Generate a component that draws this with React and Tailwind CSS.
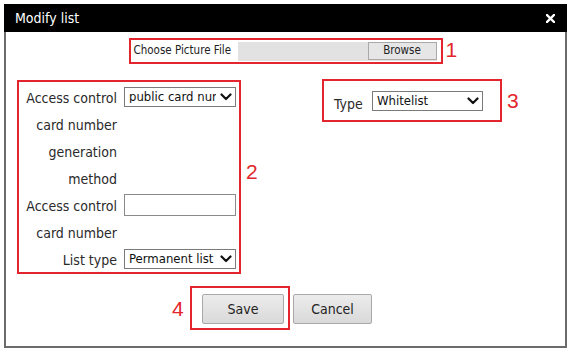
const FONT = "font-['DejaVu_Sans_Condensed','DejaVu_Sans',sans-serif]"

function Chevron() {
  return (
    <svg width="12" height="8" viewBox="0 0 12 8" className="shrink-0">
      <path d="M1.5 1.5 L6 6 L10.5 1.5" fill="none" stroke="#111" strokeWidth="2.2" strokeLinecap="round" strokeLinejoin="round" />
    </svg>
  )
}

function FakeSelect({ value, textWidth, className = '' }) {
  return (
    <div className={`flex items-center h-[20px] bg-white border border-[#7a7a7a] pl-[4px] pr-[3px] ${className}`}>
      <div className={`overflow-hidden whitespace-nowrap text-[13px] leading-none text-[#111] ${textWidth}`}>{value}</div>
      <div className="flex-1" />
      <Chevron />
    </div>
  )
}

function Num({ children, className = '' }) {
  return (
    <span className={`font-['Liberation_Sans',sans-serif] text-[21px] leading-none text-[#e3262d] ${className}`}>{children}</span>
  )
}

const rows = [
  { label: 'Access control', control: <FakeSelect value="public card number" textWidth="w-[87px]" className="w-[112px]" /> },
  { label: 'card number' },
  { label: 'generation' },
  { label: 'method' },
  { label: 'Access control', control: <div className="w-[112px] h-[22px] bg-white border border-[#8a8a8a]" /> },
  { label: 'card number' },
  { label: 'List type', control: <FakeSelect value="Permanent list" textWidth="w-[88px]" className="w-[112px]" /> },
]

export default function App() {
  return (
    <div className={`w-[572px] h-[352px] bg-white pt-[4px] pl-[4px] ${FONT}`}>
      <div className="w-[563px] flex flex-col">
        {/* title bar */}
        <div className="h-[28px] bg-black flex items-center pl-[11px] pr-[12px]">
          <span className="text-white text-[14px] leading-none">Modify list</span>
          <div className="flex-1" />
          <svg width="9" height="9" viewBox="0 0 9 9">
            <path d="M1 1 L8 8 M8 1 L1 8" stroke="#fff" strokeWidth="2.4" strokeLinecap="square" />
          </svg>
        </div>

        <div className="h-[316px] border-x-2 border-b-2 border-[#6b6b6b] flex flex-col">
          {/* file picker */}
          <div className="grid grid-cols-[1fr_auto_1fr] items-center mt-[6px]">
            <div />
            <div className="h-[26px] border-2 border-[#e3262d] flex items-center pl-[3px] pr-[4px]">
              <span className="text-[11.5px] leading-none text-[#222] w-[104px]">Choose Picture File</span>
              <div className="flex items-center w-[199px] h-[19px] bg-[#e2e2e2]">
                <div className="flex-1" />
                <div className="w-[69px] h-[18px] border border-[#a9a9a9] bg-[#e6e6e6] flex items-center justify-center text-[11.5px] leading-none text-[#222]">Browse</div>
              </div>
            </div>
            <div className="pl-[3px]">
              <Num>1</Num>
            </div>
          </div>

          {/* fields */}
          <div className="flex items-start mt-[15px] pl-[11px]">
            <div className="w-[305px] flex items-center mt-[1px]">
              <div className="w-[224px] border-2 border-[#e3262d] pt-[1px] pl-[4px] grid grid-cols-[94px_112px] gap-x-[7px]">
                {rows.map((r, i) => (
                  <div key={i} className="contents">
                    <div className="h-[27px] flex items-center justify-end whitespace-nowrap text-[14px] leading-none text-[#2a2a2a] pt-[3px]">{r.label}</div>
                    <div className="h-[27px] flex items-center">{r.control}</div>
                  </div>
                ))}
              </div>
              <Num className="ml-[5px] mb-[12px]">2</Num>
            </div>

            <div className="flex items-center">
              <div className="w-[180px] h-[43px] border-2 border-[#e3262d] flex items-center pl-[10px]">
                <span className="text-[14px] leading-none text-[#2a2a2a] w-[38px] pt-[6px]">Type</span>
                <FakeSelect value="Whitelist" textWidth="w-[60px]" className="w-[111px] h-[19px]" />
              </div>
              <Num className="ml-[5px]">3</Num>
            </div>
          </div>

          {/* buttons */}
          <div className="flex items-center mt-[12px] pl-[166px]">
            <Num className="w-[18px]">4</Num>
            <div className="w-[100px] h-[44px] border-2 border-[#e3262d] pl-[10px] pt-[6px]">
              <button className="w-[82px] h-[30px] rounded-[2px] border border-[#a8a8a8] bg-gradient-to-b from-[#ececec] to-[#d9d9d9] text-[14px] text-[#222]">Save</button>
            </div>
            <button className="ml-[3px] mt-[2px] w-[79px] h-[30px] rounded-[2px] border border-[#a8a8a8] bg-gradient-to-b from-[#ececec] to-[#d9d9d9] text-[14px] text-[#222]">Cancel</button>
          </div>
        </div>
      </div>
    </div>
  )
}
